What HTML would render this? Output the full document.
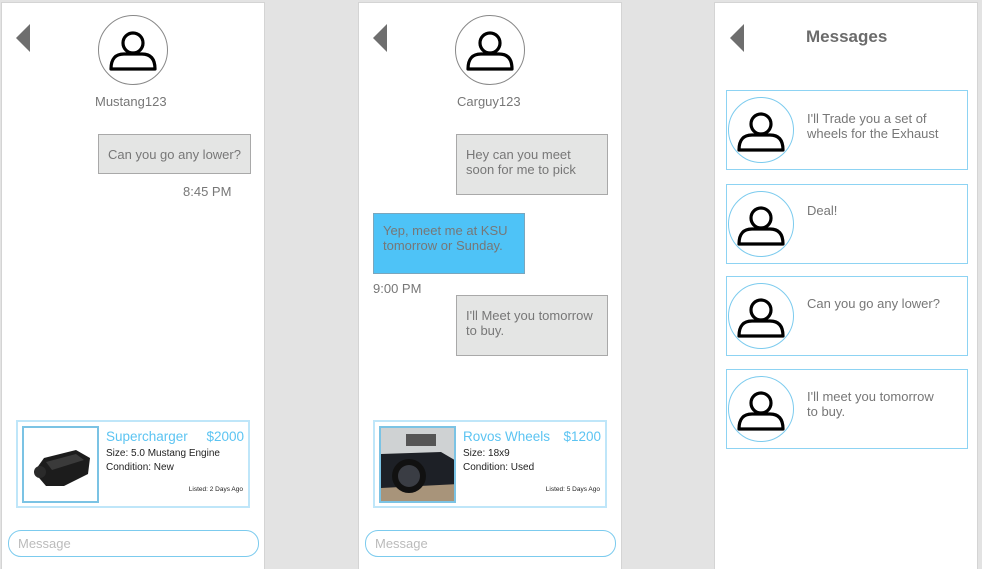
<!DOCTYPE html>
<html style="overflow:hidden"><head><style>
*{margin:0;padding:0;box-sizing:border-box}
body{width:982px;height:569px;background:#e3e3e3;position:relative;overflow:hidden;font-family:"Liberation Sans",sans-serif;color:#777}
.a{position:absolute}
.panel{position:absolute;top:2px;height:567px;background:#fff;border:1px solid #d4d4d4;border-bottom:none}
.back{position:absolute;width:0;height:0;border-top:14px solid transparent;border-bottom:14px solid transparent;border-right:14px solid #6e6e6e}
.av{position:absolute;border:1px solid #888;border-radius:50%;background:#fff}
.bub{position:absolute;background:#e4e5e4;border:1px solid #a9a9a9;font-size:13px;color:#777;padding:12px 9px;line-height:15px}
.card{position:absolute;border:2px solid #bfe6f9;height:88px;width:234px}
.card .img{position:absolute;left:4px;top:4px;width:77px;height:77px;border:2px solid #7bc3e4;overflow:hidden}
.card .t{position:absolute;left:88px;top:7px;font-size:13.5px;color:#5cc4f2}
.card .p{position:absolute;right:4px;top:7px;font-size:13.5px;color:#5cc4f2}
.card .s{position:absolute;left:88px;font-size:10px;color:#222}
.card .l{position:absolute;right:5px;top:64px;font-size:6.5px;color:#222}
.inp{position:absolute;height:27px;width:251px;border:1px solid #7ccbee;border-radius:13px;font-size:13px;color:#bbb;padding:5px 9px}
.item{position:absolute;left:726px;width:242px;height:80px;border:1px solid #8dd3f3}
.item .av{left:1px;top:6px;width:66px;height:66px;border-color:#7ccbee}
.item .tx{position:absolute;left:80px;top:20px;font-size:13px;line-height:15px;color:#777}
</style></head><body>
<svg width="0" height="0" style="position:absolute"><defs><g id="ic"><circle cx="0" cy="-9" r="10" fill="none" stroke="#000" stroke-width="3.2"/><path d="M-22 17 Q-22 2 -9 2 L9 2 Q22 2 22 17 Z" fill="none" stroke="#000" stroke-width="3.2" stroke-linejoin="round"/></g></defs></svg>

<div class="panel" style="left:1px;width:264px"></div>
<div class="panel" style="left:358px;width:264px"></div>
<div class="panel" style="left:714px;width:264px"></div>

<!-- panel 1 -->
<div class="back" style="left:16px;top:24px"></div>
<div class="av" style="left:98px;top:15px;width:70px;height:70px"></div>
<svg class="a" style="left:98px;top:15px" width="70" height="70"><use href="#ic" x="35" y="37"/></svg>
<div class="a" style="left:95px;top:94px;font-size:13px">Mustang123</div>
<div class="bub" style="left:98px;top:134px;width:153px;height:40px;padding:12px 9px">Can you go any lower?</div>
<div class="a" style="left:183px;top:184px;font-size:13px">8:45 PM</div>
<div class="card" style="left:16px;top:420px">
<div class="img"><svg width="77" height="77"><rect width="77" height="77" fill="#fff"/><path d="M10 44 L20 30 L52 22 L66 30 L64 46 L40 58 L22 58 Z" fill="#1c1c1c"/><path d="M22 34 L52 26 L60 32 L28 42Z" fill="#3a3a3a"/><circle cx="16" cy="44" r="6" fill="#2a2a2a"/></svg></div>
<div class="t">Supercharger</div><div class="p">$2000</div>
<div class="s" style="top:26px">Size: 5.0 Mustang Engine</div>
<div class="s" style="top:40px">Condition: New</div>
<div class="l">Listed: 2 Days Ago</div>
</div>
<div class="inp" style="left:8px;top:530px">Message</div>

<!-- panel 2 -->
<div class="back" style="left:373px;top:24px"></div>
<div class="av" style="left:455px;top:15px;width:70px;height:70px"></div>
<svg class="a" style="left:455px;top:15px" width="70" height="70"><use href="#ic" x="35" y="37"/></svg>
<div class="a" style="left:457px;top:94px;font-size:13px">Carguy123</div>
<div class="bub" style="left:456px;top:134px;width:152px;height:61px">Hey can you meet soon for me to pick</div>
<div class="bub" style="left:373px;top:213px;width:152px;height:61px;background:#4ec3f7;border-color:#7aa6bd;padding:9px 9px">Yep, meet me at KSU tomorrow or Sunday.</div>
<div class="a" style="left:373px;top:281px;font-size:13px">9:00 PM</div>
<div class="bub" style="left:456px;top:295px;width:152px;height:61px">I'll Meet you tomorrow to buy.</div>
<div class="card" style="left:373px;top:420px">
<div class="img"><svg width="77" height="77"><rect width="77" height="77" fill="#cfd2d3"/><rect x="25" y="6" width="30" height="12" fill="#555"/><rect y="55" width="77" height="22" fill="#a8947a"/><path d="M0 26 L60 24 L77 34 L77 56 L0 60Z" fill="#1d2026"/><circle cx="28" cy="48" r="17" fill="#111"/><circle cx="28" cy="48" r="11" fill="#3a3d44"/></svg></div>
<div class="t">Rovos Wheels</div><div class="p">$1200</div>
<div class="s" style="top:26px">Size: 18x9</div>
<div class="s" style="top:40px">Condition: Used</div>
<div class="l">Listed: 5 Days Ago</div>
</div>
<div class="inp" style="left:365px;top:530px">Message</div>

<!-- panel 3 -->
<div class="back" style="left:730px;top:24px"></div>
<div class="a" style="left:806px;top:27px;font-size:17px;font-weight:bold;color:#6b6b6b">Messages</div>
<div class="item" style="top:90px"><div class="av"></div><svg class="a" style="left:1px;top:6px" width="66" height="66"><use href="#ic" x="33" y="36"/></svg><div class="tx">I'll Trade you a set of<br>wheels for the Exhaust</div></div>
<div class="item" style="top:184px"><div class="av"></div><svg class="a" style="left:1px;top:6px" width="66" height="66"><use href="#ic" x="33" y="36"/></svg><div class="tx" style="top:18px">Deal!</div></div>
<div class="item" style="top:276px"><div class="av"></div><svg class="a" style="left:1px;top:6px" width="66" height="66"><use href="#ic" x="33" y="36"/></svg><div class="tx" style="top:19px">Can you go any lower?</div></div>
<div class="item" style="top:369px"><div class="av"></div><svg class="a" style="left:1px;top:6px" width="66" height="66"><use href="#ic" x="33" y="36"/></svg><div class="tx" style="top:19px">I'll meet you tomorrow<br>to buy.</div></div>
</body></html>
